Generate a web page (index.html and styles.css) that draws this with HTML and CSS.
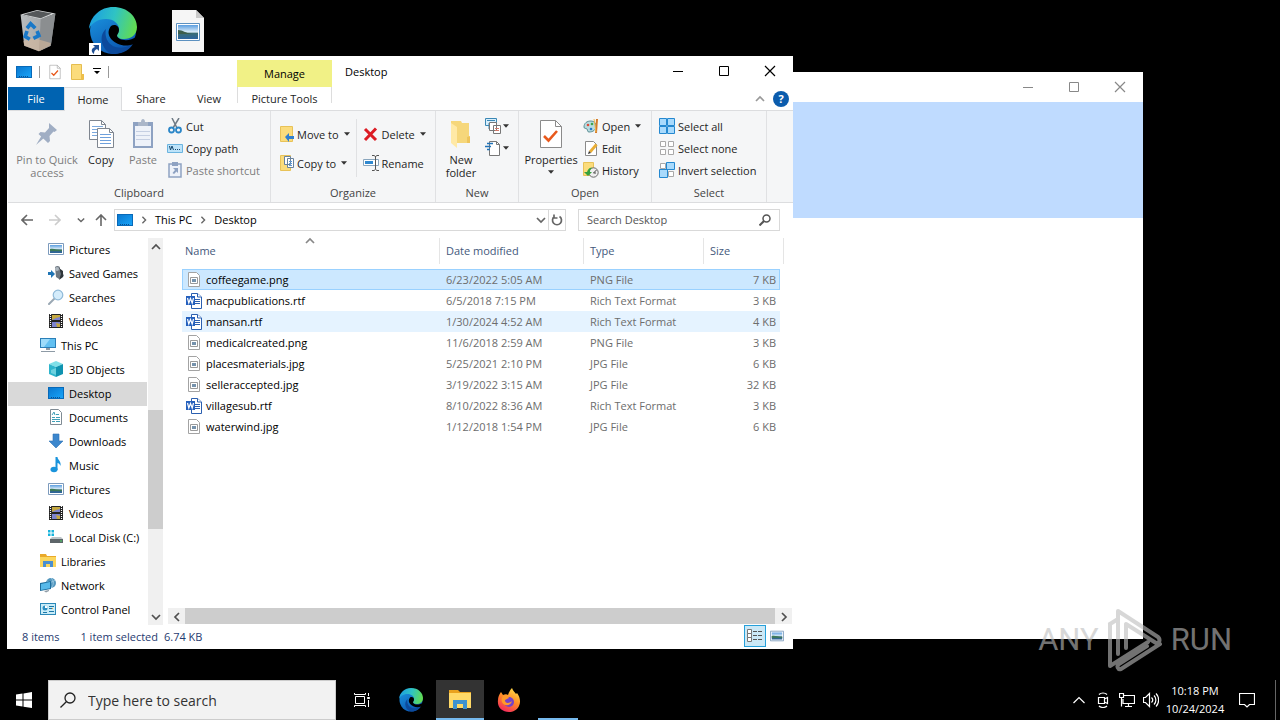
FILE: index.html
```html
<!DOCTYPE html>
<html lang="en">
<head>
    <meta charset="UTF-8">
    <meta name="viewport" content="width=device-width, initial-scale=1.0">
    <title>Desktop</title>
    <link rel="stylesheet" href="styles.css">
</head>
<body>
    <!-- Icon sprite -->
    <svg class="sprite" aria-hidden="true">
        <defs>
            <linearGradient id="blueScreen" x1="0" y1="0" x2="1" y2="1"><stop offset="0" stop-color="#0a78d0"/><stop offset="1" stop-color="#18a4f8"/></linearGradient>
            <linearGradient id="edgeTop" x1="0" y1="0.3" x2="1" y2="0.5"><stop offset="0" stop-color="#1b9de2"/><stop offset="0.5" stop-color="#2fc3c4"/><stop offset="1" stop-color="#62dc50"/></linearGradient>
            <linearGradient id="edgeSide" x1="0" y1="0" x2="0.6" y2="1"><stop offset="0" stop-color="#1c9be4"/><stop offset="1" stop-color="#0b56b0"/></linearGradient>
            <linearGradient id="fire" x1="0.8" y1="0" x2="0.3" y2="1"><stop offset="0" stop-color="#ffe14a"/><stop offset="0.5" stop-color="#ff8a26"/><stop offset="1" stop-color="#f4265e"/></linearGradient>
            <linearGradient id="binSide" x1="0" y1="0" x2="1" y2="0"><stop offset="0" stop-color="#b9bcbe"/><stop offset="0.6" stop-color="#a5a8aa"/><stop offset="1" stop-color="#77797b"/></linearGradient>
            <linearGradient id="sky" x1="0" y1="0" x2="0" y2="1"><stop offset="0" stop-color="#5b9ee0"/><stop offset="0.5" stop-color="#dcecf8"/><stop offset="0.6" stop-color="#3b6d74"/><stop offset="1" stop-color="#2c64a0"/></linearGradient>
        </defs>
        <symbol id="i-desktop" viewBox="0 0 16 16"><path fill="#0869b8" d="M0 2h16v12H0z"/><path fill="url(#blueScreen)" d="M1 3h14v10H1z"/><path stroke="#0b4f90" stroke-dasharray="1 1" d="M3 12.500h10"/></symbol>
        <symbol id="i-pictures" viewBox="0 0 16 16"><path fill="#fff" stroke="#7d9bbd" d="M.5 2.500h15v11H.5z"/><path fill="url(#sky)" d="M2 4h12v8H2z"/><path fill="#3c7a57" d="M2 8c4-1 6 1 12 1v1H2z"/></symbol>
        <symbol id="i-games" viewBox="0 0 16 16"><path fill="#6d7780" d="M7 2c2-2 5-1 5 1 0 1-1 2-1 2l3 1 2 5-5 3-3-2z"/><path fill="#2f353a" d="M11 3l2 6-2 6 4-3V6z"/><circle cx="9" cy="4" r="2" fill="#aeb8c0"/><path fill="#1f75b5" d="M0 7h3V5l4 4-4 4v-3H0z"/></symbol>
        <symbol id="i-search" viewBox="0 0 16 16"><path stroke="#9aa8b4" stroke-width="2" stroke-linecap="round" d="M6 10l-5 5"/><circle cx="10" cy="6" r="4.800" fill="#d4ecfb" stroke="#8fb9d8" stroke-width="1.200"/></symbol>
        <symbol id="i-videos" viewBox="0 0 16 16"><path fill="#222" d="M1 1h14v14H1z"/><path fill="#7d83cf" d="M4 2h8v5H4zM4 9h8v5H4z"/><path fill="#c4a840" d="M4 2h8v2l-4 1-4 2zM8 10l4 1v3H9z"/><path stroke="#fff" stroke-width="1.200" stroke-dasharray="1 1" d="M2.500 1v14M13.500 1v14"/></symbol>
        <symbol id="i-pc" viewBox="0 0 16 16"><path fill="#2b7fb8" d="M0 1h16v10H0z"/><path fill="#62c0f1" d="M1 2h14v8H1z"/><path fill="#9ddbfa" d="M1 2h9L4 10H1z"/><path fill="#8d9aa5" d="M6 11h4v2H6zM1 14h14v1H1z"/></symbol>
        <symbol id="i-3d" viewBox="0 0 16 16"><path fill="#7fe0e8" d="M1 3l7-3 7 3-7 3z"/><path fill="#2eb5cc" d="M1 3l7 3v10l-7-3z"/><path fill="#0f93b0" d="M15 3L8 6v10l7-3z"/><path fill="#a9eef2" d="M3 9l5-2v7l-5-2z" opacity=".5"/></symbol>
        <symbol id="i-docs" viewBox="0 0 16 16"><path fill="#fff" stroke="#7f8b94" d="M2.500.5h8l3 3v12h-11z"/><path fill="none" stroke="#3f9fb8" d="M4 6l2-3 1 3M8 5.500h3M4 8.500h3M8 8.500h4M4 10.500h8M4 12.500h3M8 12.500h4"/></symbol>
        <symbol id="i-down" viewBox="0 0 16 16"><path fill="#3c87cd" stroke="#2f73b5" stroke-width=".6" d="M5 1h6v7h4l-7 7-7-7h4z"/></symbol>
        <symbol id="i-music" viewBox="0 0 16 16"><ellipse cx="6" cy="12.500" rx="3.500" ry="2.800" fill="#1a94dc"/><path fill="#1a94dc" d="M7.500 0h2c0 3 4 4 3 9-.6-2-2-3-3-3v7h-2z"/></symbol>
        <symbol id="i-disk" viewBox="0 0 16 16"><path fill="#18b4dc" d="M0 1h2.500v2.500H0zM3.500 1H6v2.500H3.500zM0 4.500h2.500V7H0zM3.500 4.500H6V7H3.500z"/><path fill="#bdc4c8" d="M4 8h9l2 2H2z"/><path fill="#5d6569" d="M2 10h13v4H2z"/><path fill="#4cd964" d="M12 11.500h2v1h-2z"/></symbol>
        <symbol id="i-libs" viewBox="0 0 16 16"><path fill="#e9a92a" d="M0 1h6l1 2h9v3H0z"/><path fill="#fbd65c" d="M0 4h16v10H0z"/><path fill="#4a8fd0" d="M3 8h10v6h-3v-3H6v3H3z"/></symbol>
        <symbol id="i-network" viewBox="0 0 16 16"><circle cx="11" cy="6" r="5" fill="#5396bd"/><path fill="none" stroke="#a6d2e8" stroke-width=".8" d="M11 1c3 3 3 7 0 10M7 4c3 2 6 1 8-1"/><path fill="#1d6d9d" d="M0 6l11-2v8L0 14z"/><path fill="#57b9ea" d="M1 7l9-2v6.300L1 13z"/><path fill="#8d9aa5" d="M4 14l5-1v1l-3 1.500z"/></symbol>
        <symbol id="i-panel" viewBox="0 0 16 16"><path fill="#2b88b8" d="M0 2h16v12H0z"/><path fill="#c9ecf8" d="M1 3h14v10H1z"/><circle cx="5" cy="7" r="2.500" fill="#2c8fc2"/><path fill="#fff" d="M5 7V4.500A2.500 2.500 0 017.500 7z"/><path stroke="#1c78a8" d="M9 5.500h5M9 7.500h3M3 11.500h4M9 10.500h5"/><path fill="#f0a030" d="M12 7h1v1h-1z"/></symbol>
        <symbol id="i-image" viewBox="0 0 16 16"><path fill="#fff" stroke="#a3a3a3" d="M2.500.5h8l3 3v11h-11z"/><path fill="#fff" stroke="#9a9a9a" d="M4.500 5.500h7v6h-7z"/><path fill="#7592ac" d="M6 7h4v3H6z"/></symbol>
        <symbol id="i-word" viewBox="0 0 16 16"><path fill="#fff" stroke="#2b5fb0" d="M5.500.5h6l4 3.500v11.500h-10z"/><path fill="#fff" stroke="#2b5fb0" d="M11.500.5V4h4"/><path stroke="#2b5fb0" d="M9 6.500h5M9 8.500h5M9 10.500h5"/><path fill="#2560bd" d="M0 3h9v9H0z"/><path fill="none" stroke="#fff" stroke-width="1.200" d="M1.500 5l1.300 5L4.500 5.500 6.200 10l1.300-5"/></symbol>
        <symbol id="i-check" viewBox="0 0 24 32"><path fill="#fff" stroke="#8b8b8b" d="M1.500 2.500h15l6 6v21h-21z"/><path fill="none" stroke="#8b8b8b" d="M16.500 2.500v6h6"/><path fill="none" stroke="#e8591c" stroke-width="2.600" d="M5 18l4.500 4.500L18 13"/></symbol>
        <symbol id="i-folder" viewBox="0 0 24 32"><path fill="#f6d77b" d="M2 3h10l1 2h7v20H2z"/><path fill="#ffe9a6" d="M2 5l6 4v21l-6-5z"/><path fill="#eec45c" d="M18 19l3-1v7h-3z"/></symbol>
        <symbol id="i-qfolder" viewBox="0 0 16 16"><path fill="#fbdc7c" stroke="#e5bd4f" d="M1.500.5h10v10h2v5h-12z"/><path fill="#eebf4a" d="M11 10h3v5h-3z"/></symbol>
        <symbol id="i-pin" viewBox="0 0 24 32"><g fill="#a0aec4"><path d="M14 5l8 7-2.500 2-1-.5-4 4.500.5 5-2 2-9.500-9 2-2 4.500.5 4-4.500z"/><path d="M7 17l2.500 2.500L1 27z"/></g></symbol>
        <symbol id="i-copy" viewBox="0 0 26 32"><path fill="#fff" stroke="#7f8690" d="M1.500 2.500h12l4 4v15h-16z"/><path stroke="#7ca9dd" d="M4 8.500h11M4 11.500h11M4 14.500h11M4 17.500h11"/><path fill="#fff" stroke="#7f8690" d="M9.500 10.500h12l4 4v15h-16z"/><path fill="none" stroke="#7f8690" d="M21.500 10.500v4h4M13.500 2.500v4h4"/><path stroke="#6ea0dc" d="M12 16.500h11M12 19.500h11M12 22.500h11M12 25.500h11"/></symbol>
        <symbol id="i-paste" viewBox="0 0 24 32"><path fill="#8ea2c2" d="M2 4h20v26H2z"/><path fill="#eef2f9" d="M4 8h16v20H4z"/><path stroke="#c5cfe2" d="M5 13.500h14M5 17.500h14M5 21.500h14"/><path fill="#aab6c9" d="M7 4h3c0-4 4-4 4 0h3v4H7z"/></symbol>
        <symbol id="i-cut" viewBox="0 0 16 16"><path stroke="#6f7b86" stroke-width="1.500" d="M5 0l5 10M12 0L6 10"/><g fill="none" stroke="#2a86c8" stroke-width="1.800"><circle cx="4.500" cy="12" r="2.500"/><circle cx="11.500" cy="12" r="2.500"/></g></symbol>
        <symbol id="i-path" viewBox="0 0 16 16"><path fill="#bde3f9" stroke="#6bb4df" d="M.5 4.500h15v8H.5z"/><path fill="none" stroke="#174a70" d="M2.500 6l1 4 1.500-4 1.500 4"/><path fill="#174a70" d="M8 9h1v1H8zM10 9h1v1h-1zM12 9h1v1h-1z"/></symbol>
        <symbol id="i-shortcut" viewBox="0 0 16 16"><path fill="#eef2f9" stroke="#8ea2c2" stroke-width="1.500" d="M2 2h12v13H2z"/><path fill="#8ea2c2" d="M5 0h6v4H5zM6 6h5v5L9.500 9.500 7 12 5.500 11 8 8z"/></symbol>
        <symbol id="i-moveto" viewBox="0 0 14 16"><path fill="#fbdc7c" stroke="#e8c258" d="M.5.5h12v15H.5z"/><path fill="#2f7fd0" d="M5 11l4-4v3h5v3H9v3z"/></symbol>
        <symbol id="i-copyto" viewBox="0 0 14 16"><path fill="#fbdc7c" stroke="#e8c258" d="M.5.5h10v15H.5z"/><path fill="#fff" stroke="#68819c" d="M4.500 1.500h6v8h-6zM7.500 3.500h6v9h-6z"/><path stroke="#5a96d6" d="M9 6.500h3M9 8.500h3M9 10.500h3"/></symbol>
        <symbol id="i-delete" viewBox="0 0 16 16"><path stroke="#dc1c24" stroke-width="3" d="M2 3l11 11M13 2.500L2 14"/></symbol>
        <symbol id="i-rename" viewBox="0 0 16 16"><path fill="#fff" stroke="#8aa6bd" d="M.5 4.500h15v6H.5z"/><path fill="#2f88cf" d="M2 6h8v3H2z"/><path fill="none" stroke="#555" d="M9 .5h2l1.500 1 1.500-1h2M12.500 1v13M9 15.500h2l1.500-1 1.500 1h2"/></symbol>
        <symbol id="i-newitem" viewBox="0 0 16 16"><path fill="#d8effc" stroke="#3b88b5" d="M.5.500h11v7H.5z"/><path stroke="#3b88b5" d="M2 2.500h8M4 5v6h4"/><path fill="#fff" stroke="#777" d="M4.500 4.500h7v8h-7zM8.500 7.500h7v8h-7z"/><path stroke="#d27a6b" d="M10 10.500h4M10 12.500h4"/></symbol>
        <symbol id="i-easy" viewBox="0 0 16 16"><path fill="#fff" stroke="#777" d="M4.500 1.500h7l3 3v11h-10z"/><path fill="none" stroke="#777" d="M11.500 1.500v3h3"/><path stroke="#2173b8" stroke-width="1.400" d="M2 3.500h6M0 6.500h6M2 9.500h3"/></symbol>
        <symbol id="i-open" viewBox="0 0 16 16"><path fill="#b9dce0" stroke="#5d8f95" d="M1 9c0-4 3-6 7-6 3 0 5 2 5 5 0 4-3 6-7 6-2 0-1-2-2-3s-3 0-3-2z"/><circle cx="5" cy="7" r="1.300" fill="#dd4b39"/><circle cx="9" cy="6" r="1.300" fill="#3fa34d"/><circle cx="8" cy="11" r="1.300" fill="#2979c8"/><path stroke="#d47a2a" stroke-width="2" d="M14 1l-1 14"/><path stroke="#efb74a" d="M11 1l2 13"/></symbol>
        <symbol id="i-edit" viewBox="0 0 16 16"><path fill="#fff" stroke="#8b8b8b" d="M2.500 1.500h8l3 3v11h-11z"/><path stroke="#e9ad35" stroke-width="2.800" d="M13.500 4.500L7 12"/><path fill="#333" d="M6 11l2 2-3 1z"/></symbol>
        <symbol id="i-history" viewBox="0 0 16 16"><path fill="#fbdc7c" stroke="#e8c258" d="M.5.500h10v13H.5z"/><circle cx="10.500" cy="10.500" r="4.700" fill="#eee" stroke="#686868"/><path fill="none" stroke="#444" d="M10.500 11l3-3M10.500 11H13"/><path fill="#36a13d" d="M1 10h3c1-3 3-5 5-4-2 1-2 3-2 4h2l-4 4z"/></symbol>
        <symbol id="i-selall" viewBox="0 0 16 16"><path fill="#a9dafc" stroke="#2488d0" d="M.5.500h7v7h-7zM8.500.5h7v7h-7zM.5 8.500h7v7h-7zM8.500 8.500h7v7h-7z"/></symbol>
        <symbol id="i-selnone" viewBox="0 0 16 16"><path fill="#fff" stroke="#a9a9a9" d="M1.500 1.500h5v5h-5zM9.500 1.500h5v5h-5zM1.500 9.500h5v5h-5zM9.500 9.500h5v5h-5z"/></symbol>
        <symbol id="i-selinv" viewBox="0 0 16 16"><path fill="#fff" stroke="#a9a9a9" d="M1.500 1.500h5v5h-5zM9.500 9.500h5v5h-5z"/><path fill="#a9dafc" stroke="#2488d0" d="M7.500.500h8v7h-8zM.5 7.500h8v8h-8z"/></symbol>
        <symbol id="i-caret" viewBox="0 0 7 4"><path fill="#333" d="M0 0h7L3.500 4z"/></symbol>
        <symbol id="i-up" viewBox="0 0 10 10"><path fill="none" stroke="currentColor" stroke-width="1.700" d="M1 7l4-4 4 4"/></symbol>
        <symbol id="i-dn" viewBox="0 0 10 10"><path fill="none" stroke="currentColor" stroke-width="1.700" d="M1 3l4 4 4-4"/></symbol>
        <symbol id="i-lt" viewBox="0 0 10 10"><path fill="none" stroke="currentColor" stroke-width="1.700" d="M7 1L3 5l4 4"/></symbol>
        <symbol id="i-rt" viewBox="0 0 10 10"><path fill="none" stroke="currentColor" stroke-width="1.700" d="M3 1l4 4-4 4"/></symbol>
        <symbol id="i-back" viewBox="0 0 12 12"><path fill="none" stroke="currentColor" stroke-width="1.600" d="M12 6H1M6 1L1 6l5 5"/></symbol>
        <symbol id="i-min" viewBox="0 0 12 12"><path stroke="currentColor" d="M1 6.500h10"/></symbol>
        <symbol id="i-max" viewBox="0 0 12 12"><path fill="none" stroke="currentColor" d="M1.500 1.500h9v9h-9z"/></symbol>
        <symbol id="i-close" viewBox="0 0 12 12"><path stroke="currentColor" stroke-width="1.200" d="M1 1l10 10M11 1L1 11"/></symbol>
        <symbol id="i-edge" viewBox="0 0 48 48"><circle cx="24" cy="24" r="23" fill="url(#edgeSide)"/><path fill="#0c4a9c" d="M17 22c-3 13 9 25 27 15-5 8-13 10-20 10C14 45 8 30 17 22z"/><path fill="url(#edgeTop)" d="M0 22C1 9 12 0 24 0c15 0 24 10 24 20 0 8-6 12-13 12-5 0-7-2-7-4 0-1 2-2 2-6 0-5-5-10-13-10C8 12 2 17 0 22z"/><path fill="#000" d="M22 19c3-2 8-1 8 4 0 3-2 4-2 6 1 4 12 7 20 0v5l-4 3c-13 6-31-7-22-18z"/></symbol>
    </svg>

    <main class="desktop">
        <div class="shortcuts">
            <button class="shortcut" aria-label="Recycle Bin">
                <svg width="40" height="44" viewBox="0 0 40 48"><path fill="#d5d7d8" d="M1 6l18-5 20 4-16 7z"/><path fill="#55585a" d="M4 6l15-4 16 3-12 5z"/><path fill="url(#binSide)" d="M1 6l22 5 16-6-5 35-13 6-16-6z"/><path fill="#8b8e90" d="M23 11l16-6-5 35-13 6z"/><path fill="#d9b99b" opacity=".6" d="M4 35l12-3 18 5-1 3-12 6-16-6z"/><g fill="none" stroke="#1978c8" stroke-width="4"><path d="M8 21l4-5 5 5M19 24l2 5-6 3M11 33l-5-3 2-6"/></g></svg>
            </button>
            <button class="shortcut" aria-label="Microsoft Edge">
                <svg width="48" height="48"><use href="#i-edge"/><path fill="#fff" d="M0 36h12v12H0z"/><path fill="#1e4f94" d="M4 38h6v6l-2-2c-2 1-3 2-3 5-4-3-2-6 1-7z"/></svg>
            </button>
            <button class="shortcut" aria-label="Picture file">
                <svg width="32" height="42" viewBox="0 0 32 42"><path fill="#f6f6f6" d="M0 0h24l8 8v34H0z"/><path fill="#c9c9c9" d="M24 0v8h8z"/><path fill="#fff" stroke="#5d91c0" d="M4.500 13.500h23v17h-23z"/><path fill="url(#sky)" d="M6 15h20v14H6z"/><path fill="#3d5e4d" d="M6 20c5 0 7 3 14 4H6z"/></svg>
            </button>
        </div>

        <!-- Window at the back -->
        <section class="window window-back" aria-label="Background window">
            <div class="controls">
                <button class="control" aria-label="Minimize"><svg class="i12"><use href="#i-min"/></svg></button>
                <button class="control" aria-label="Maximize"><svg class="i12"><use href="#i-max"/></svg></button>
                <button class="control" aria-label="Close"><svg class="i12"><use href="#i-close"/></svg></button>
            </div>
            <div class="banner"></div>
        </section>

        <!-- File Explorer -->
        <section class="window explorer" aria-label="File Explorer">
            <header class="titlebar">
                <div class="quick">
                    <svg class="i16"><use href="#i-desktop"/></svg>
                    <span class="bar"></span>
                    <button aria-label="Properties"><svg class="i16"><use href="#i-check"/></svg></button>
                    <button aria-label="New folder"><svg class="i16"><use href="#i-qfolder"/></svg></button>
                    <button aria-label="Customize"><svg class="customize" viewBox="0 0 8 7"><path d="M0 0h8v1H0zM1 3h6L4 6z"/></svg></button>
                    <span class="bar"></span>
                </div>
                <span class="manage">Manage</span>
                <span class="title">Desktop</span>
                <div class="controls">
                    <button class="control" aria-label="Minimize"><svg class="i12"><use href="#i-min"/></svg></button>
                    <button class="control" aria-label="Maximize"><svg class="i12"><use href="#i-max"/></svg></button>
                    <button class="control" aria-label="Close"><svg class="i12"><use href="#i-close"/></svg></button>
                </div>
            </header>

            <nav class="tabs">
                <button class="tab file">File</button>
                <button class="tab active">Home</button>
                <button class="tab">Share</button>
                <button class="tab">View</button>
                <button class="tab tools">Picture Tools</button>
                <button class="collapse" aria-label="Collapse ribbon"><svg class="i10"><use href="#i-up"/></svg></button>
                <button class="help" aria-label="Help">?</button>
            </nav>

            <div class="ribbon">
                <div class="group clipboard">
                    <div class="tools-row">
                        <button class="big pin" disabled><svg><use href="#i-pin"/></svg>Pin to Quick access</button>
                        <button class="big"><svg><use href="#i-copy"/></svg>Copy</button>
                        <button class="big" disabled><svg><use href="#i-paste"/></svg>Paste</button>
                        <div class="stack">
                            <button class="small"><svg class="i16"><use href="#i-cut"/></svg>Cut</button>
                            <button class="small"><svg class="i16"><use href="#i-path"/></svg>Copy path</button>
                            <button class="small" disabled><svg class="i16"><use href="#i-shortcut"/></svg>Paste shortcut</button>
                        </div>
                    </div>
                    <div class="group-name">Clipboard</div>
                </div>
                <div class="group organize">
                    <div class="tools-row">
                        <div class="stack loose">
                            <button class="small"><svg class="i14"><use href="#i-moveto"/></svg>Move to<svg class="caret"><use href="#i-caret"/></svg></button>
                            <button class="small"><svg class="i14"><use href="#i-copyto"/></svg>Copy to<svg class="caret"><use href="#i-caret"/></svg></button>
                        </div>
                        <div class="stack loose divided">
                            <button class="small"><svg class="i16"><use href="#i-delete"/></svg>Delete<svg class="caret"><use href="#i-caret"/></svg></button>
                            <button class="small"><svg class="i16"><use href="#i-rename"/></svg>Rename</button>
                        </div>
                    </div>
                    <div class="group-name">Organize</div>
                </div>
                <div class="group new">
                    <div class="tools-row">
                        <button class="big"><svg><use href="#i-folder"/></svg>New folder</button>
                        <div class="stack">
                            <button class="small tight" aria-label="New item"><svg class="i16"><use href="#i-newitem"/></svg><svg class="caret"><use href="#i-caret"/></svg></button>
                            <button class="small tight" aria-label="Easy access"><svg class="i16"><use href="#i-easy"/></svg><svg class="caret"><use href="#i-caret"/></svg></button>
                        </div>
                    </div>
                    <div class="group-name">New</div>
                </div>
                <div class="group open">
                    <div class="tools-row">
                        <button class="big props"><svg><use href="#i-check"/></svg>Properties<svg class="caret"><use href="#i-caret"/></svg></button>
                        <div class="stack">
                            <button class="small"><svg class="i16"><use href="#i-open"/></svg>Open<svg class="caret"><use href="#i-caret"/></svg></button>
                            <button class="small"><svg class="i16"><use href="#i-edit"/></svg>Edit</button>
                            <button class="small"><svg class="i16"><use href="#i-history"/></svg>History</button>
                        </div>
                    </div>
                    <div class="group-name">Open</div>
                </div>
                <div class="group select">
                    <div class="tools-row">
                        <div class="stack">
                            <button class="small"><svg class="i16"><use href="#i-selall"/></svg>Select all</button>
                            <button class="small"><svg class="i16"><use href="#i-selnone"/></svg>Select none</button>
                            <button class="small"><svg class="i16"><use href="#i-selinv"/></svg>Invert selection</button>
                        </div>
                    </div>
                    <div class="group-name">Select</div>
                </div>
            </div>

            <div class="address-row">
                <div class="history">
                    <button aria-label="Back"><svg class="i12"><use href="#i-back"/></svg></button>
                    <button class="off" aria-label="Forward"><svg class="i12 flip"><use href="#i-back"/></svg></button>
                    <button class="recent" aria-label="Recent"><svg class="i8"><use href="#i-dn"/></svg></button>
                    <button aria-label="Up"><svg class="i12 turn"><use href="#i-back"/></svg></button>
                </div>
                <div class="address">
                    <svg class="i16"><use href="#i-desktop"/></svg>
                    <svg class="i8"><use href="#i-rt"/></svg>
                    <a href="#">This PC</a>
                    <svg class="i8"><use href="#i-rt"/></svg>
                    <a href="#">Desktop</a>
                    <button class="drop" aria-label="Previous locations"><svg class="i10"><use href="#i-dn"/></svg></button>
                    <button class="refresh" aria-label="Refresh"><svg class="i12" viewBox="0 0 12 12"><path fill="none" stroke="currentColor" stroke-width="1.700" d="M8.500 2.500a4.500 4.500 0 11-5 0M3 .5v3.500h3.500"/></svg></button>
                </div>
                <label class="search">
                    <input type="text" placeholder="Search Desktop" aria-label="Search Desktop">
                    <svg class="i12" viewBox="0 0 12 12"><circle cx="7.500" cy="4.500" r="3.500" fill="none" stroke="currentColor" stroke-width="1.500"/><path stroke="currentColor" stroke-width="2" d="M5 7l-4.500 4.500"/></svg>
                </label>
            </div>

            <div class="panes">
                <nav class="tree">
                    <a href="#" class="sub"><svg class="i16"><use href="#i-pictures"/></svg>Pictures</a>
                    <a href="#" class="sub"><svg class="i16"><use href="#i-games"/></svg>Saved Games</a>
                    <a href="#" class="sub"><svg class="i16"><use href="#i-search"/></svg>Searches</a>
                    <a href="#" class="sub"><svg class="i16"><use href="#i-videos"/></svg>Videos</a>
                    <a href="#"><svg class="i16"><use href="#i-pc"/></svg>This PC</a>
                    <a href="#" class="sub"><svg class="i16"><use href="#i-3d"/></svg>3D Objects</a>
                    <a href="#" class="sub current"><svg class="i16"><use href="#i-desktop"/></svg>Desktop</a>
                    <a href="#" class="sub"><svg class="i16"><use href="#i-docs"/></svg>Documents</a>
                    <a href="#" class="sub"><svg class="i16"><use href="#i-down"/></svg>Downloads</a>
                    <a href="#" class="sub"><svg class="i16"><use href="#i-music"/></svg>Music</a>
                    <a href="#" class="sub"><svg class="i16"><use href="#i-pictures"/></svg>Pictures</a>
                    <a href="#" class="sub"><svg class="i16"><use href="#i-videos"/></svg>Videos</a>
                    <a href="#" class="sub"><svg class="i16"><use href="#i-disk"/></svg>Local Disk (C:)</a>
                    <a href="#"><svg class="i16"><use href="#i-libs"/></svg>Libraries</a>
                    <a href="#"><svg class="i16"><use href="#i-network"/></svg>Network</a>
                    <a href="#"><svg class="i16"><use href="#i-panel"/></svg>Control Panel</a>
                </nav>
                <div class="vscroll">
                    <button aria-label="Scroll up"><svg class="i10"><use href="#i-up"/></svg></button>
                    <div class="track"><div class="thumb"></div></div>
                    <button aria-label="Scroll down"><svg class="i10"><use href="#i-dn"/></svg></button>
                </div>
                <div class="files">
                    <table>
                        <thead>
                            <tr>
                                <th class="name">Name<svg class="sort i10"><use href="#i-up"/></svg></th>
                                <th class="date">Date modified</th>
                                <th class="type">Type</th>
                                <th class="size">Size</th>
                            </tr>
                        </thead>
                        <tbody>
                            <tr class="selected"><td><svg class="i16"><use href="#i-image"/></svg>coffeegame.png</td><td>6/23/2022 5:05 AM</td><td>PNG File</td><td>7 KB</td></tr>
                            <tr><td><svg class="i16"><use href="#i-word"/></svg>macpublications.rtf</td><td>6/5/2018 7:15 PM</td><td>Rich Text Format</td><td>3 KB</td></tr>
                            <tr class="hover"><td><svg class="i16"><use href="#i-word"/></svg>mansan.rtf</td><td>1/30/2024 4:52 AM</td><td>Rich Text Format</td><td>4 KB</td></tr>
                            <tr><td><svg class="i16"><use href="#i-image"/></svg>medicalcreated.png</td><td>11/6/2018 2:59 AM</td><td>PNG File</td><td>3 KB</td></tr>
                            <tr><td><svg class="i16"><use href="#i-image"/></svg>placesmaterials.jpg</td><td>5/25/2021 2:10 PM</td><td>JPG File</td><td>6 KB</td></tr>
                            <tr><td><svg class="i16"><use href="#i-image"/></svg>selleraccepted.jpg</td><td>3/19/2022 3:15 AM</td><td>JPG File</td><td>32 KB</td></tr>
                            <tr><td><svg class="i16"><use href="#i-word"/></svg>villagesub.rtf</td><td>8/10/2022 8:36 AM</td><td>Rich Text Format</td><td>3 KB</td></tr>
                            <tr><td><svg class="i16"><use href="#i-image"/></svg>waterwind.jpg</td><td>1/12/2018 1:54 PM</td><td>JPG File</td><td>6 KB</td></tr>
                        </tbody>
                    </table>
                    <div class="hscroll">
                        <button aria-label="Scroll left"><svg class="i10"><use href="#i-lt"/></svg></button>
                        <div class="thumb"></div>
                        <button aria-label="Scroll right"><svg class="i10"><use href="#i-rt"/></svg></button>
                    </div>
                </div>
            </div>

            <footer class="status">
                <span class="count">8 items</span>
                <span>1 item selected</span>
                <span>6.74 KB</span>
                <button class="view on" aria-label="Details view"><svg class="i16" viewBox="0 0 16 16"><path fill="#fff" stroke="#777" d="M.5 1.500h4v4h-4zM.5 5.500h4v4h-4zM.5 9.500h4v4h-4z"/><path stroke="#555" stroke-dasharray="4 1" d="M6 3.500h10M6 7.500h10M6 11.500h10"/></svg></button>
                <button class="view" aria-label="Thumbnail view"><svg class="i14"><use href="#i-pictures"/></svg></button>
            </footer>
        </section>

        <div class="watermark">
            <span>ANY</span>
            <svg width="56" height="64" viewBox="0 0 56 64" fill="none" stroke="currentColor" stroke-width="4" stroke-linejoin="round" stroke-linecap="round"><path d="M3 16v42l38-24M11 46V3l40 26c3 3 1 7-2 6L19 16v24"/><path d="M11 11l-8 5M53 36L14 61c-3 1-5-3-2-5l28-18"/></svg>
            <span>RUN</span>
        </div>
    </main>

    <footer class="taskbar">
        <button class="start" aria-label="Start"><svg class="i16" viewBox="0 0 16 16"><path fill="#fff" d="M0 2.500L6.500 1.600v6H0zM7.500 1.400L16 0v7.600H7.500zM0 8.500h6.500v6L0 13.500zM7.500 8.500H16V16l-8.500-1.300z"/></svg></button>
        <label class="task-search">
            <svg class="i16" viewBox="0 0 16 16" fill="none" stroke="#222" stroke-width="1.300"><circle cx="10" cy="6" r="5"/><path d="M6.300 9.700L.5 15.500"/></svg>
            <input type="text" placeholder="Type here to search" aria-label="Type here to search">
        </label>
        <div class="apps">
            <button class="app" aria-label="Task View"><svg class="i16" viewBox="0 0 16 16" fill="none" stroke="#fff"><path d="M1.500 4.500h9v7h-9zM.5 1v1.500h11V1M.5 15v-1.500h11V15M14.500 1v3M14.500 8v7"/><path fill="#fff" d="M13.500 5.500h2v1h-2z"/></svg></button>
            <button class="app" aria-label="Microsoft Edge"><svg class="i24"><use href="#i-edge"/></svg></button>
            <button class="app front" aria-label="File Explorer"><svg class="i24" viewBox="0 0 24 24"><path fill="#e9a21e" d="M1 3h9l2 2h11v5H1z"/><path fill="#ffd967" d="M1 6h22v15H1z"/><path fill="#3f92cf" d="M5 13h14v9h-4v-5H9v5H5z"/></svg></button>
            <button class="app" aria-label="Firefox"><svg class="i24" viewBox="0 0 24 24"><path fill="url(#fire)" d="M15 0c1 3 3 4 4 6l1-1c3 4 4 9 2 13-2 4-6 6-10 6C5 24 0 19 1 12c0-3 1-5 3-8l2 3c2-1 4-1 5 0 1-3 2-5 4-7z"/><circle cx="12" cy="14" r="5" fill="#7542c9"/><path fill="#ff9a2a" d="M6 8c3-1 5 0 6 2-1 1-4 1-4 3 1 3 5 2 7 0-1 5-8 6-10 1-1-2 0-5 1-6z"/></svg></button>
            <button class="app running" aria-label="Running program"></button>
        </div>
        <div class="tray">
            <button aria-label="Show hidden icons"><svg class="i12" viewBox="0 0 12 12"><path d="M.5 9L6 3.500 11.500 9"/></svg></button>
            <button aria-label="Camera"><svg class="i16" viewBox="0 0 16 16"><path d="M3.500 5.500h6v6h-6zM9.500 7l3-1.500v6l-3-1.500M4 2.500c2-2 6-2 8 0M4 14c2 2 6 2 8 0"/></svg></button>
            <button aria-label="Network"><svg class="i16" viewBox="0 0 16 16"><path d="M5 3.500h10.500v8H4V7M.5 1.500h4v4h-4zM2.500 6v8.500M6 14.500h7M9.500 12v2"/></svg></button>
            <button aria-label="Volume"><svg class="i16" viewBox="0 0 16 16"><path d="M.5 5.500h2l4-4v13l-4-4h-2zM8.500 5.500c1.500 1.500 1.500 3.500 0 5M11 3.500c2.500 2.500 2.500 6.500 0 9M13 1.500c3.500 3.500 3.500 9.500 0 13"/></svg></button>
            <time class="clock">10:18 PM<br>10/24/2024</time>
            <button class="notes" aria-label="Notifications"><svg class="i16" viewBox="0 0 16 16"><path d="M.5 1.500h15v11h-5L8 15l-2.500-2.500h-5z"/></svg></button>
            <button class="peek" aria-label="Show desktop"></button>
        </div>
    </footer>
</body>
</html>
```

FILE: styles.css
```css
* {
    box-sizing: border-box;
}
body {
    display: flex;
    flex-direction: column;
    min-height: 100vh;
    margin: 0;
    background: #000;
    color: #1e1e1e;
    font-family: 'Open Sans', 'Noto Sans', sans-serif;
    font-size: 11px;
    line-height: 13px;
}
button, input {
    margin: 0;
    padding: 0;
    border: none;
    background: none;
    color: inherit;
    font: inherit;
}
a {
    color: inherit;
    text-decoration: none;
}
svg {
    display: block;
    flex: none;
}
.sprite {
    position: absolute;
    width: 0;
    height: 0;
}
.i8 { width: 8px; height: 8px; }
.i10 { width: 10px; height: 10px; }
.i12 { width: 12px; height: 12px; }
.i14 { width: 14px; height: 16px; }
.i16 { width: 16px; height: 16px; }
.i24 { width: 24px; height: 24px; }
.caret { width: 6px; height: 4px; }

/* Desktop */
.desktop {
    position: relative;
    flex: 1;
    overflow: hidden;
}
.shortcuts {
    display: flex;
    align-items: center;
    padding-top: 7px;
}
.shortcut {
    display: flex;
    justify-content: center;
    width: 75px;
}

/* Windows */
.window {
    position: absolute;
    background: #fff;
}
.window-back {
    left: 357px;
    top: 72px;
    width: 786px;
    height: 567px;
    color: #888;
}
.banner {
    height: 116px;
    background: #bfdbff;
}
.controls {
    display: flex;
    justify-content: flex-end;
    height: 30px;
    margin-left: auto;
}
.control {
    display: flex;
    align-items: center;
    justify-content: center;
    width: 46px;
}

.explorer {
    display: flex;
    flex-direction: column;
    left: 7px;
    top: 56px;
    width: 786px;
    height: 593px;
    padding-left: 1px;
}
.titlebar {
    display: flex;
    height: 31px;
    color: #000;
}
.quick {
    display: flex;
    align-items: center;
    gap: 7px;
    width: 229px;
    padding-left: 8px;
}
.bar {
    width: 1px;
    height: 12px;
    background: #999;
}
.customize {
    width: 8px;
    height: 7px;
}
.manage {
    width: 95px;
    margin-top: 4px;
    background: #f1f186;
    line-height: 28px;
    text-align: center;
}
.title {
    padding-left: 13px;
    line-height: 32px;
}

/* Tabs */
.tabs {
    display: flex;
    height: 24px;
    border-bottom: 1px solid #dcdddf;
}
.tab {
    width: 58px;
    line-height: 24px;
}
.tab.file {
    width: 56px;
    background: #0063b1;
    color: #fff;
}
.tab.active {
    margin-bottom: -1px;
    border: 1px solid #dcdddf;
    border-bottom: none;
    background: #f5f6f7;
    line-height: 22px;
}
.tab.tools {
    width: 95px;
    height: 16px;
    margin-left: -1px;
    border: 1px solid #ddd;
    border-top: none;
    border-bottom: none;
}
.collapse {
    margin-left: auto;
    padding: 0 8px;
    color: #999;
}
.help {
    align-self: center;
    width: 16px;
    height: 16px;
    margin-right: 4px;
    border-radius: 50%;
    background: #0b5cad;
    color: #fff;
    font-weight: bold;
}

/* Ribbon */
.ribbon {
    display: flex;
    height: 92px;
    border-bottom: 1px solid #dcdddf;
    background: #f5f6f7;
}
.group {
    display: flex;
    flex-direction: column;
    border-right: 1px solid #e0e1e3;
}
.clipboard { width: 263px; }
.organize { width: 165px; }
.new { width: 83px; }
.open { width: 133px; }
.select { width: 115px; }
.tools-row {
    display: flex;
    flex: 1;
}
.clipboard .tools-row { padding-left: 6px; }
.organize .tools-row { padding-left: 9px; }
.new .tools-row { padding-left: 4px; }
.open .tools-row { padding-left: 3px; }
.select .tools-row { padding-left: 7px; }
.group-name {
    height: 16px;
    color: #444;
    text-align: center;
}
.big {
    display: flex;
    flex-direction: column;
    align-items: center;
    width: 42px;
    padding-top: 7px;
}
.big svg {
    width: 28px;
    height: 32px;
    margin-bottom: 3px;
}
.big .caret {
    width: 6px;
    height: 4px;
    margin-top: 4px;
}
.big.pin {
    width: 66px;
}
.big.props {
    width: 58px;
}
button:disabled {
    color: #7c7c7c;
}
.stack {
    display: flex;
    flex-direction: column;
    padding: 4px 0 0 3px;
}
.small {
    display: flex;
    align-items: center;
    gap: 3px;
    height: 22px;
    white-space: nowrap;
}
.small .caret {
    margin-left: 2px;
}
.small.tight {
    gap: 0;
}
.select .stack,
.organize .stack {
    padding-left: 0;
}
.stack.loose {
    gap: 7px;
    height: 66px;
    padding-top: 12px;
}
.organize .divided {
    height: 58px;
    margin: 8px 0 0 6px;
    padding: 4px 0 0 6px;
    border-left: 1px solid #e0e1e3;
}

/* Address bar */
.address-row {
    display: flex;
    align-items: center;
    height: 35px;
    padding: 0 13px 2px 0;
}
.history {
    display: flex;
    align-items: center;
    gap: 16px;
    width: 106px;
    padding-left: 13px;
    color: #666;
}
.history .off {
    color: #ccc;
}
.history .recent {
    margin-right: -6px;
}
.flip { transform: scaleX(-1); }
.turn { transform: rotate(90deg); }
.address {
    display: flex;
    flex: 1;
    align-items: center;
    gap: 7px;
    height: 22px;
    padding-left: 2px;
    border: 1px solid #d9d9d9;
    color: #000;
}
.address > .i8,
.drop,
.refresh {
    color: #666;
}
.drop {
    margin-left: auto;
    margin-right: -5px;
}
.refresh {
    align-self: stretch;
    padding: 0 2px;
    border-left: 1px solid #d9d9d9;
}
.search {
    display: flex;
    align-items: center;
    width: 202px;
    height: 22px;
    margin-left: 12px;
    padding: 0 8px;
    border: 1px solid #d9d9d9;
    color: #555;
}
.search input {
    flex: 1;
    min-width: 0;
}
input::placeholder {
    color: inherit;
    opacity: 1;
}

/* Navigation tree */
.panes {
    display: flex;
    flex: 1;
    min-height: 0;
    color: #000;
}
.tree {
    width: 140px;
    overflow: hidden;
}
.tree a {
    display: flex;
    align-items: center;
    gap: 5px;
    height: 24px;
    margin-right: 1px;
    padding: 0 0 2px 32px;
    white-space: nowrap;
}
.tree .sub {
    padding-left: 40px;
}
.tree .current {
    background: #d9d9d9;
}
.vscroll {
    display: flex;
    flex-direction: column;
    width: 15px;
    background: #f0f0f0;
    color: #505050;
}
.vscroll button,
.hscroll button {
    display: flex;
    align-items: center;
    justify-content: center;
    width: 17px;
    height: 17px;
}
.vscroll button {
    width: 15px;
}
.track {
    display: flex;
    flex: 1;
    flex-direction: column;
    justify-content: flex-end;
    padding-bottom: 79px;
}
.thumb {
    height: 119px;
    background: #cdcdcd;
}

/* File list */
.files {
    display: flex;
    flex: 1;
    flex-direction: column;
    justify-content: space-between;
    padding: 0 1px 1px 5px;
}
table {
    width: 598px;
    margin-left: 14px;
    border-spacing: 0;
    table-layout: fixed;
}
th {
    position: relative;
    height: 26px;
    padding: 0 0 2px 6px;
    border-right: 1px solid #e5e5e5;
    color: #44597c;
    font-weight: normal;
    text-align: left;
}
th.name { width: 258px; padding-left: 3px; }
th.date { width: 144px; }
th.type { width: 120px; }
th.size { border-right: none; }
th.size::after {
    content: '';
    position: absolute;
    top: 0;
    right: -4px;
    height: 26px;
    border-right: 1px solid #e5e5e5;
}
.sort {
    position: absolute;
    top: -2px;
    left: calc(50% - 6px);
    color: #888;
}
tbody::before {
    content: '';
    display: block;
    height: 5px;
}
td {
    height: 21px;
    padding: 0 0 0 6px;
    color: #6d6d6d;
    white-space: nowrap;
}
td:first-child {
    display: flex;
    align-items: center;
    gap: 4px;
    padding-left: 4px;
    color: #000;
}
td:last-child {
    padding-right: 4px;
    text-align: right;
}
.selected {
    outline: 1px solid #99d1ff;
    outline-offset: -1px;
    background: #cce8ff;
}
.hover {
    background: #e5f3ff;
}
.hscroll {
    display: flex;
    height: 16px;
    background: #f0f0f0;
    color: #505050;
}
.hscroll .thumb {
    flex: 1;
    height: 16px;
}

/* Status bar */
.status {
    display: flex;
    align-items: center;
    gap: 6px;
    height: 24px;
    padding: 0 9px 2px 14px;
    color: #1f3b70;
}
.count {
    margin-right: 15px;
}
.view {
    display: flex;
    align-items: center;
    justify-content: center;
    height: 22px;
}
.view.on {
    width: 22px;
    margin-left: auto;
    margin-right: -2px;
    border: 1px solid #26a0da;
    background: #cbe8f6;
}

/* Watermark */
.watermark {
    display: flex;
    position: absolute;
    right: 48px;
    bottom: 8px;
    align-items: center;
    gap: 8px;
    color: #bebebe;
    font-family: Roboto, sans-serif;
    font-size: 31px;
    line-height: 64px;
    opacity: 0.6;
}

/* Taskbar */
.taskbar {
    display: flex;
    height: 40px;
    color: #fff;
}
.start {
    display: flex;
    align-items: center;
    justify-content: center;
    width: 48px;
}
.task-search {
    display: flex;
    align-items: center;
    gap: 12px;
    width: 288px;
    padding: 0 11px;
    border: 1px solid #ccc;
    background: #f2f2f2;
    color: #333;
    font-size: 14px;
}
.task-search input {
    flex: 1;
    min-width: 0;
}
.apps {
    display: flex;
    gap: 1px;
    padding-left: 2px;
}
.app {
    display: flex;
    align-items: center;
    justify-content: center;
    width: 48px;
}
.app.front {
    border-bottom: 2px solid #76b9ed;
    background: #333;
}
.app.running {
    width: 40px;
    margin-left: 4px;
    border-bottom: 2px solid #76b9ed;
}
.tray {
    display: flex;
    align-items: center;
    margin-left: auto;
}
.tray button {
    display: flex;
    align-items: center;
    justify-content: center;
    width: 24px;
    height: 40px;
}
.tray svg {
    fill: none;
    stroke: #fff;
    stroke-width: 1.2;
}
.clock {
    width: 64px;
    line-height: 18px;
    text-align: center;
}
.tray .notes {
    width: 40px;
}
.tray .peek {
    width: 5px;
    margin-left: 8px;
    border-left: 1px solid #666;
}
```
